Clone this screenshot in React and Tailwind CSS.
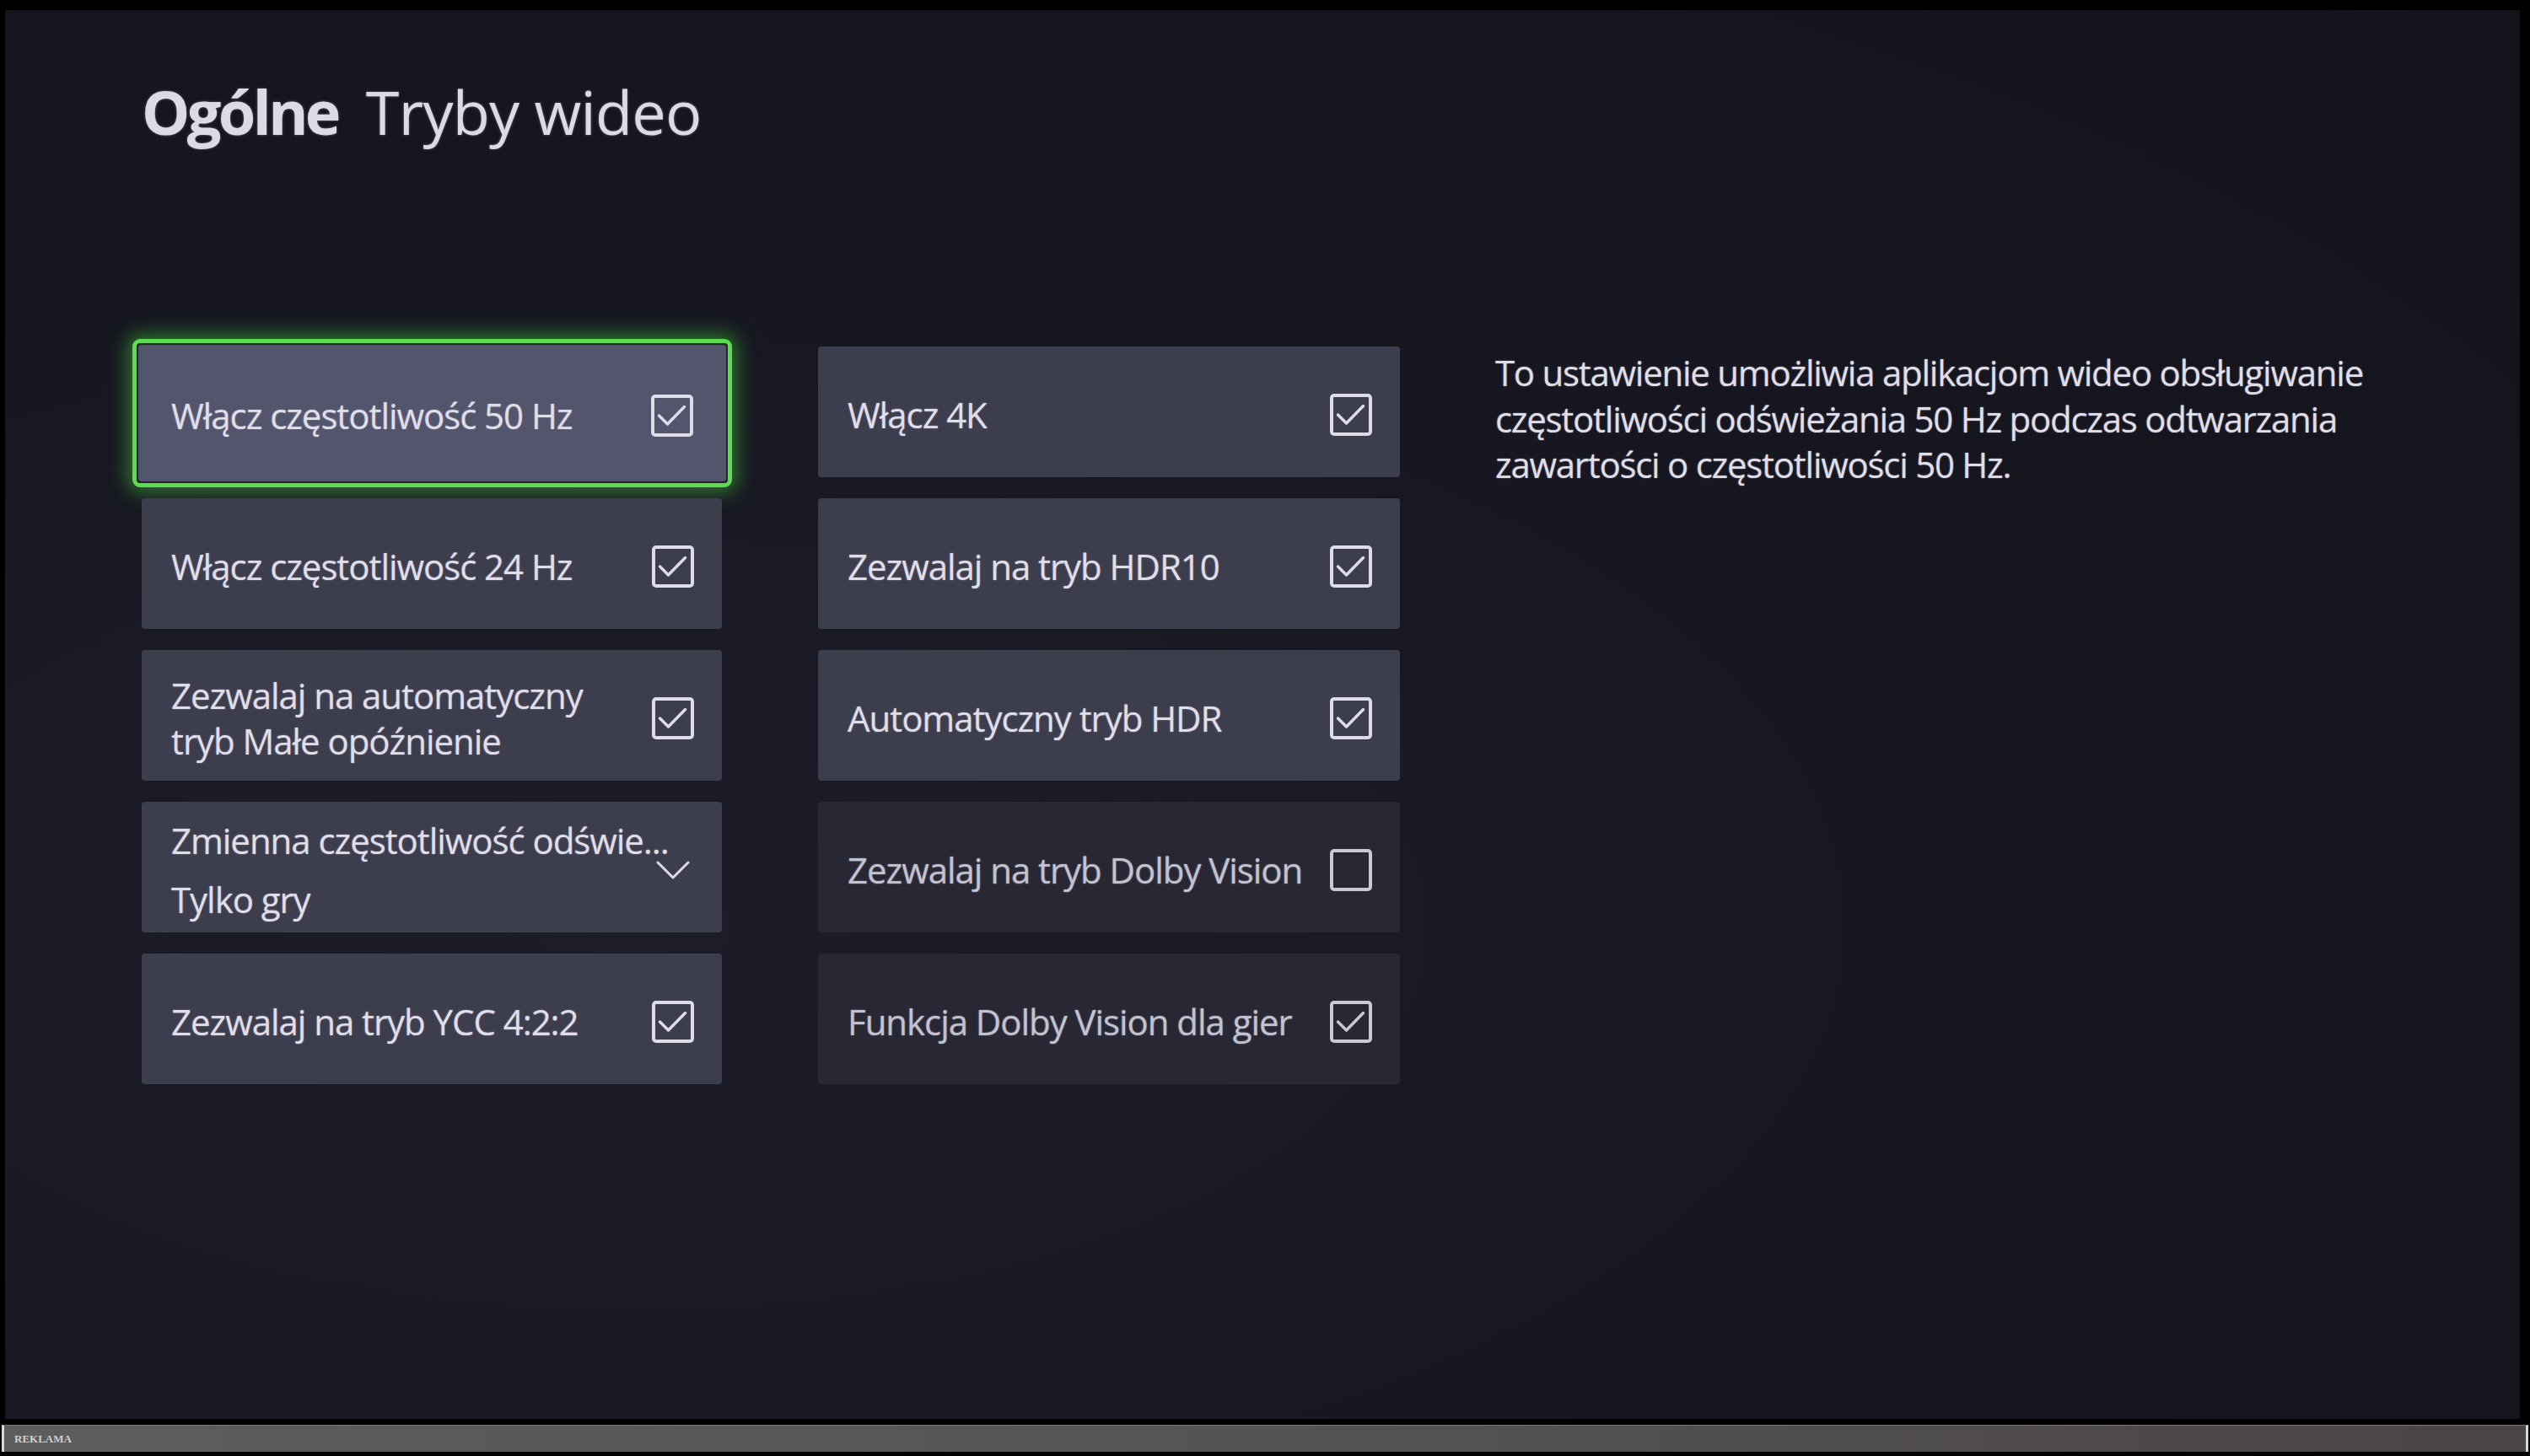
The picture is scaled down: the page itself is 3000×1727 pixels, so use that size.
import React from "react";

const LEFT = [
  { label: "Włącz częstotliwość 50 Hz", checked: true, focused: true },
  { label: "Włącz częstotliwość 24 Hz", checked: true },
  { label: ["Zezwalaj na automatyczny", "tryb Małe opóźnienie"], checked: true },
  { label: "Zmienna częstotliwość odświe...", value: "Tylko gry", dropdown: true },
  { label: "Zezwalaj na tryb YCC 4:2:2", checked: true },
];

const RIGHT = [
  { label: "Włącz 4K", checked: true },
  { label: "Zezwalaj na tryb HDR10", checked: true },
  { label: "Automatyczny tryb HDR", checked: true },
  { label: "Zezwalaj na tryb Dolby Vision", checked: false, dim: true },
  { label: "Funkcja Dolby Vision dla gier", checked: true, dim: true },
];

function Checkbox({ checked, dim }) {
  return (
    <div
      className={
        "w-[50px] h-[50px] shrink-0 rounded-[5px] border-[4px] " +
        (dim ? "border-[#c9c8d6] text-[#c9c8d6]" : "border-[#dedce9] text-[#dedce9]")
      }
    >
      {checked && (
        <svg viewBox="0 0 42 42" className="w-full h-full" fill="none" stroke="currentColor" strokeWidth="3.5" strokeLinecap="round" strokeLinejoin="round">
          <path d="M5.5 21 L15.5 31 L35.5 10.5" />
        </svg>
      )}
    </div>
  );
}

function Chevron() {
  return (
    <svg viewBox="0 0 40 22" className="w-[40px] h-[22px] shrink-0 mr-[5px] text-[#dedce9]" fill="none" stroke="currentColor" strokeWidth="3" strokeLinecap="round" strokeLinejoin="round">
      <path d="M2 2 L20 20 L38 2" />
    </svg>
  );
}

function CardBody({ item, className }) {
  const lines = Array.isArray(item.label) ? item.label : [item.label];
  return (
    <div
      className={
        "flex items-center justify-between gap-[12px] pt-[6px] rounded-[4px] text-[42px] leading-[54px] tracking-[-0.025em] [text-shadow:0_0_2px_rgba(225,222,238,0.45)] " +
        (item.dim ? "text-[#c3c2d0] " : "text-[#e0dee9] ") +
        className
      }
    >
      <div className="flex flex-col min-w-0 whitespace-nowrap">
        {lines.map((l) => (
          <span key={l}>{l}</span>
        ))}
        {item.value && <span className="mt-[16px]">{item.value}</span>}
      </div>
      {item.dropdown ? <Chevron /> : <Checkbox checked={item.checked} dim={item.dim} />}
    </div>
  );
}

function Card({ item }) {
  if (item.focused) {
    return (
      <div className="h-[176px] -mt-[9px] -mb-[12px] -ml-[11px] -mr-[12px] rounded-[9px] border-[5px] border-[#5ddb52] p-[2px] bg-[#1a2a1c] shadow-[0_0_22px_6px_rgba(70,210,60,0.5)]">
        <CardBody item={item} className="h-full pl-[39px] pr-[39px] bg-[#52556b]" />
      </div>
    );
  }
  return (
    <CardBody
      item={item}
      className={"h-[155px] pl-[35px] pr-[33px] " + (item.dim ? "bg-[#272834]" : "bg-[#3c3e4d]")}
    />
  );
}

export default function App() {
  return (
    <div className="w-[3000px] h-[1727px] bg-black flex flex-col font-['Open_Sans',sans-serif]">
      {/* screen */}
      <div className="mt-[12px] ml-[6px] mr-[12px] h-[1671px] bg-[radial-gradient(ellipse_at_25%_65%,#1c1d29_0%,#161720_50%,#12131b_100%)] pl-[162px] overflow-hidden">
        <h1 className="mt-[84px] text-[72px] leading-[72px] text-[#dcdae6] [text-shadow:0_0_3px_rgba(225,222,238,0.4)]">
          <span className="font-bold tracking-[-0.05em]">Ogólne</span>
          <span className="ml-[33px] tracking-[-0.01em]">Tryby wideo</span>
        </h1>

        <div className="mt-[243px] flex items-start">
          <div className="w-[688px] flex flex-col gap-[25px]">
            {LEFT.map((item, i) => (
              <Card key={i} item={item} />
            ))}
          </div>
          <div className="ml-[114px] w-[690px] flex flex-col gap-[25px]">
            {RIGHT.map((item, i) => (
              <Card key={i} item={item} />
            ))}
          </div>
          <p className="ml-[113px] mt-[4px] text-[42px] leading-[54.5px] tracking-[-0.03em] text-[#e0dee9] whitespace-nowrap [text-shadow:0_0_2px_rgba(225,222,238,0.45)]">
            <span className="block">To ustawienie umożliwia aplikacjom wideo obsługiwanie</span>
            <span className="block">częstotliwości odświeżania 50 Hz podczas odtwarzania</span>
            <span className="block">zawartości o częstotliwości 50 Hz.</span>
          </p>
        </div>
      </div>

      {/* bottom bar */}
      <div className="mt-[7px] mx-[2px] h-[32px] flex items-center border-l-[3px] border-r-[3px] border-[#d8d8d8] border-t border-t-[#7a7676] bg-[linear-gradient(90deg,#5d5d5b,#555453_50%,#4a4545)]">
        <span className="ml-[12px] text-[13px] font-bold text-[#cfcfcf] font-['Liberation_Serif',serif]">REKLAMA</span>
      </div>
    </div>
  );
}
